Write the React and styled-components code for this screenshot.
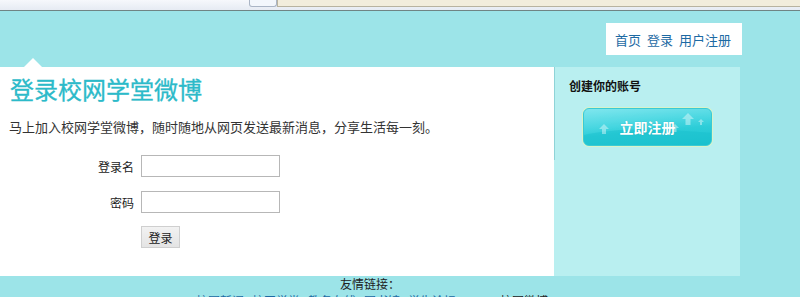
import React from "react";
import styled, { createGlobalStyle } from "styled-components";

const Global = createGlobalStyle`
  html, body { margin: 0; padding: 0; }
  body {
    background: #9ce4e8;
    font-family: "Liberation Sans", "Noto Sans CJK SC", sans-serif;
    font-size: 12px;
    color: #222;
    overflow: hidden;
  }
`;

const Page = styled.div`
  width: 800px;
  height: 297px;
  overflow: hidden;
`;

const ChromeStrip = styled.div`
  height: 10px;
  background: linear-gradient(#f6f8fc, #e6ebf3);
  border-bottom: 1px solid #6f8484;
  display: flex;
  align-items: flex-start;
  padding-left: 249px;
`;

const ChromeTab = styled.div`
  width: 26px;
  height: 6px;
  background: #f3f7fc;
  border: 1px solid #aab5c5;
  border-top: none;
  border-radius: 0 0 3px 3px;
`;

const ChromeAddress = styled.div`
  flex: 1;
  height: 6px;
  background: #f2eddc;
  border-bottom: 1px solid #b8b3a0;
  border-left: 1px solid #b8b3a0;
`;

const Header = styled.div`
  height: 56px;
  display: flex;
  justify-content: flex-end;
  align-items: flex-start;
  padding-right: 58px;
  box-sizing: border-box;
`;

const Nav = styled.nav`
  margin-top: 12px;
  height: 32px;
  width: 136px;
  background: #fff;
  display: flex;
  align-items: center;
  padding-left: 9px;
  box-sizing: border-box;
  gap: 6px;
`;

const NavLink = styled.a`
  font-family: "Noto Sans CJK SC", sans-serif;
  font-size: 13px;
  color: #1d6aa3;
  text-decoration: none;
  line-height: 1;
`;

const Main = styled.div`
  display: flex;
  width: 740px;
  height: 209px;
`;

const LeftPanel = styled.div`
  position: relative;
  width: 554px;
  background: #fff;
  padding: 7px 0 0 10px;
  box-sizing: border-box;

  &::before {
    content: "";
    position: absolute;
    left: 24px;
    top: -9px;
    border-left: 9px solid transparent;
    border-right: 9px solid transparent;
    border-bottom: 9px solid #fff;
  }
`;

const Title = styled.h1`
  margin: 0;
  font-family: "Noto Sans CJK SC", sans-serif;
  font-weight: 400;
  font-size: 24px;
  line-height: 30px;
  color: #2cbac9;
  -webkit-text-stroke: 0.3px #2cbac9;
`;

const Intro = styled.p`
  margin: 13px 0 0 -1px;
  font-family: "Noto Sans CJK SC", sans-serif;
  font-size: 13px;
  line-height: 20px;
  color: #333;
`;

const Form = styled.form`
  margin: 18px 0 0 -10px;
  display: grid;
  grid-template-columns: 134px 139px;
  column-gap: 7px;
  row-gap: 14px;
  align-items: center;
`;

const Label = styled.label`
  text-align: right;
  font-family: "Noto Sans CJK SC", sans-serif;
  font-size: 12px;
  color: #222;
`;

const Input = styled.input`
  width: 139px;
  height: 22px;
  box-sizing: border-box;
  border: 1px solid #b7b7b7;
  background: #fff;
  margin: 0;
  padding: 0 3px;
`;

const SubmitButton = styled.button`
  grid-column: 2;
  justify-self: start;
  margin-top: -1px;
  width: 39px;
  height: 22px;
  box-sizing: border-box;
  border: 1px solid #cfcfcf;
  background: linear-gradient(#f2f2f2, #e4e4e4);
  font-family: "Noto Sans CJK SC", sans-serif;
  font-size: 12px;
  color: #222;
  padding: 0;
`;

const RightPanel = styled.div`
  width: 186px;
  background: #b9eff0;
`;

const RightTop = styled.div`
  height: 93px;
  border-left: 1px solid #8fd3d7;
  padding: 12px 0 0 14px;
  box-sizing: border-box;
`;

const SideTitle = styled.div`
  font-family: "Noto Sans CJK SC", sans-serif;
  font-weight: 700;
  font-size: 12px;
  line-height: 14px;
  color: #111;
`;

const RegisterButton = styled.a`
  position: relative;
  display: flex;
  align-items: center;
  justify-content: center;
  margin: 15px 0 0 14px;
  width: 129px;
  height: 38px;
  box-sizing: border-box;
  border-radius: 6px;
  border: 1px solid #3cc9d3;
  box-shadow: 0 0 0 1px #d8f3c8;
  background: linear-gradient(175deg, #7fe6ee 0%, #4ad7e1 40%, #2dcdd8 60%, #1bc3cf 100%);
  overflow: hidden;
  text-decoration: none;
`;

const RegisterText = styled.span`
  position: relative;
  font-family: "Noto Sans CJK SC", sans-serif;
  font-weight: 700;
  font-size: 14px;
  color: #fff;
  text-shadow: 0 0 1px rgba(0, 120, 130, 0.4);
`;

const Arrows = styled.svg`
  position: absolute;
  left: 0;
  top: 0;
`;

const Footer = styled.div`
  width: 740px;
  text-align: center;
  padding-top: 1px;
`;

const FooterTitle = styled.div`
  font-family: "Noto Sans CJK SC", sans-serif;
  font-size: 12px;
  line-height: 14px;
  color: #222;
`;

const FooterLinks = styled.div`
  font-family: "Noto Sans CJK SC", sans-serif;
  font-size: 12px;
  line-height: 14px;
  margin-top: 3px;
`;

const FooterLink = styled.a`
  color: #1d6aa3;
  text-decoration: none;
  margin: 0 4px;
`;

const FooterNote = styled.span`
  color: #222;
  margin-left: 40px;
`;

export default function App() {
  return (
    <Page>
      <Global />
      <ChromeStrip>
        <ChromeTab />
        <ChromeAddress />
      </ChromeStrip>
      <Header>
        <Nav>
          <NavLink href="#">首页</NavLink>
          <NavLink href="#">登录</NavLink>
          <NavLink href="#">用户注册</NavLink>
        </Nav>
      </Header>
      <Main>
        <LeftPanel>
          <Title>登录校网学堂微博</Title>
          <Intro>马上加入校网学堂微博，随时随地从网页发送最新消息，分享生活每一刻。</Intro>
          <Form onSubmit={(e) => e.preventDefault()}>
            <Label>登录名</Label>
            <Input type="text" />
            <Label>密码</Label>
            <Input type="password" />
            <SubmitButton type="submit">登录</SubmitButton>
          </Form>
        </LeftPanel>
        <RightPanel>
          <RightTop>
            <SideTitle>创建你的账号</SideTitle>
            <RegisterButton href="#">
              <Arrows width="129" height="38" viewBox="0 0 129 38">
                <path d="M0 26 Q40 16 129 24 L129 38 L0 38 Z" fill="#18bfcc" opacity="0.45" />
                <g fill="#ffffff" opacity="0.4">
                  <path d="M20 15 l5 5 h-3 v5 h-4 v-5 h-3 z" />
                  <path d="M104 4 l6 6 h-3.5 v6 h-5 v-6 h-3.5 z" />
                  <path d="M91 15 l4 4 h-2.5 v4 h-3 v-4 h-2.5 z" />
                  <path d="M117 10 l3 3 h-2 v3 h-2 v-3 h-2 z" />
                </g>
              </Arrows>
              <RegisterText>立即注册</RegisterText>
            </RegisterButton>
          </RightTop>
        </RightPanel>
      </Main>
      <Footer>
        <FooterTitle>友情链接：</FooterTitle>
        <FooterLinks>
          <FooterLink href="#">校园新闻</FooterLink>
          <FooterLink href="#">校网学堂</FooterLink>
          <FooterLink href="#">教务在线</FooterLink>
          <FooterLink href="#">图书馆</FooterLink>
          <FooterLink href="#">学生论坛</FooterLink>
          <FooterNote>校园微博</FooterNote>
        </FooterLinks>
      </Footer>
    </Page>
  );
}
